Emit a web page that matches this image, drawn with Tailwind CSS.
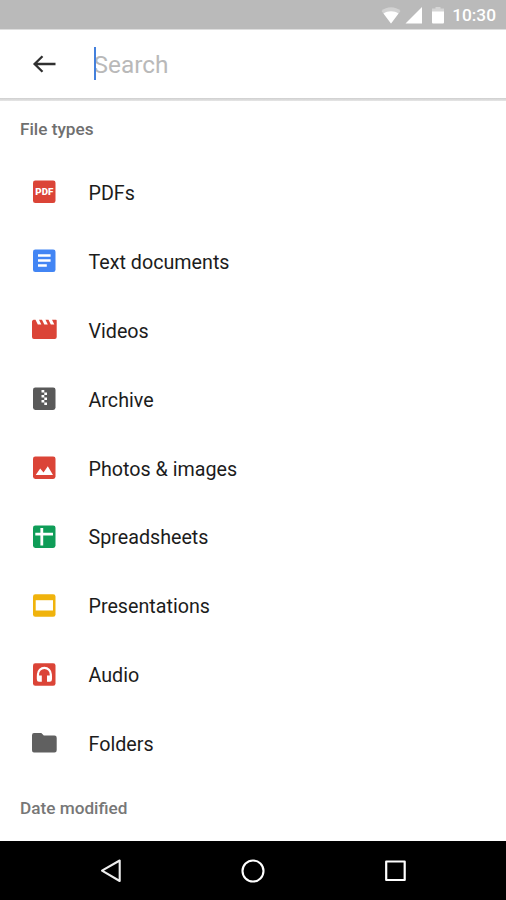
<!DOCTYPE html>
<html lang="en">
<head>
<meta charset="utf-8">
<title>Search</title>
<script src="https://cdn.jsdelivr.net/npm/@tailwindcss/browser@4"></script>
</head>
<body class="bg-white">
<div class="flex h-[900px] w-[506px] flex-col overflow-hidden bg-white font-['Roboto',sans-serif] text-[#1c1c1c]">
  <div class="flex h-[29px] shrink-0 items-center justify-end bg-[#bababa] pr-[10px] pt-[1px] text-white">
    <svg class="mr-[4px] h-[18px] w-[20px]" viewBox="0 0 20 18" fill="#fff"><path opacity=".35" d="M10 17.500 0.500 5C5.500 0 14.500 0 19.500 5Z"/><path d="M10 17.500 2.500 7.500C6.500 4.500 13.500 4.500 17.500 7.500Z"/></svg>
    <svg class="mr-[9px] h-[18px] w-[18px]" viewBox="0 0 18 18" fill="#fff"><path d="M0.500 17.500H17V1Z"/></svg>
    <svg class="mr-[8px] h-[18px] w-[12px]" viewBox="0 0 12 18" fill="#fff"><path opacity=".4" d="M3.500 1h5v1.500H12V6H0V2.500h3.500Z"/><path d="M0 5.500h12v11q0 1-1 1H1q-1 0-1-1Z"/></svg>
    <span class="text-[17.300px] font-medium leading-[20px]">10:30</span>
  </div>
  <div class="flex h-[69px] shrink-0 items-center border-t border-[#dedede] pl-[32px]">
    <svg class="h-[20px] w-[25px]" viewBox="0 0 25 20" fill="none" stroke="#303030" stroke-width="2.300"><path d="M23.500 10H2.500M10.500 2.300 2.600 10l7.900 7.700"/></svg>
    <div class="relative ml-[36.500px]">
      <span class="block pt-[1px] text-[24.400px] leading-[33px] text-[#b9b9b9]">Search</span>
      <span class="absolute left-0 top-0 h-[33px] w-[2.500px] bg-[#4380dc]"></span>
    </div>
  </div>
  <div class="h-[3px] shrink-0 bg-linear-to-b from-[#cfcfcf] to-[#e6e6e6]"></div>
  <h2 class="flex h-[57px] shrink-0 items-center pb-[2px] pl-[20px] text-[17.200px] font-medium leading-[20px] text-[#6f6f6f]">File types</h2>
  <ul class="shrink-0 text-[19.700px] leading-[24px]">
    <li class="flex h-[68.900px] items-center pl-[30px]"><svg class="mr-[30.500px] h-[28px] w-[28px]" viewBox="0 0 28 28"><rect x="3" y="2.500" width="22.500" height="22.500" rx="2.300" fill="#db4437"/><text x="14.300" y="17.300" text-anchor="middle" font-family="Roboto" font-weight="900" font-size="9.800" textLength="18" lengthAdjust="spacingAndGlyphs" fill="#fff">PDF</text></svg><span class="pt-[3px]">PDFs</span></li>
    <li class="flex h-[68.900px] items-center pl-[30px]"><svg class="mr-[30.500px] h-[28px] w-[28px]" viewBox="0 0 28 28"><rect x="3" y="2.500" width="22.500" height="22.500" rx="2.300" fill="#4285f4"/><path fill="#fff" d="M8 7.300h12.600v2.500H8ZM8 12.300h12.600v2.500H8ZM8 17.300h8.800v2.500H8Z"/></svg><span class="pt-[3px]">Text documents</span></li>
    <li class="flex h-[68.900px] items-center pl-[30px]"><svg class="mr-[30.500px] h-[28px] w-[28px]" viewBox="0 0 28 28"><path fill="#db4437" d="M3.500 3.800H5.500l2.300 4.600h3.500L9 3.800h3l2.300 4.600h3.500l-2.300-4.600h3l2.300 4.600h3.500L22 3.800h4q.7 0 .7.700V21q0 2-2 2H4q-2 0-2-2V5.500q0-1.200 1.500-1.700Z"/></svg><span class="pt-[3px]">Videos</span></li>
    <li class="flex h-[68.900px] items-center pl-[30px]"><svg class="mr-[30.500px] h-[28px] w-[28px]" viewBox="0 0 28 28"><rect x="3" y="2.400" width="22.500" height="22.500" rx="2.300" fill="#595959"/><path fill="#fff" d="M11.500 4.900h2.800v2.500h-2.800ZM14.300 7.400H17v2.500h-2.700ZM11.500 9.900h2.800v2.500h-2.800ZM14.300 12.400H17v2.500h-2.700ZM11.500 14.900h2.800v2.500h-2.800ZM14.300 17.400H17v2.500h-2.700Z"/></svg><span class="pt-[3px]">Archive</span></li>
    <li class="flex h-[68.900px] items-center pl-[30px]"><svg class="mr-[30.500px] h-[28px] w-[28px]" viewBox="0 0 28 28"><rect x="3" y="2.400" width="22.500" height="22.500" rx="2.300" fill="#db4437"/><path fill="#fff" d="m5.700 21 4.500-6.500 3.300 4 4.300-6.200 5.200 8.700Z"/></svg><span class="pt-[3px]">Photos &amp; images</span></li>
    <li class="flex h-[68.900px] items-center pl-[30px]"><svg class="mr-[30.500px] h-[28px] w-[28px]" viewBox="0 0 28 28"><rect x="3" y="2.400" width="22.500" height="22.500" rx="2.300" fill="#0f9d58"/><path fill="#fff" d="M10.400 5h2.800v4.800h9.800v2.600h-9.800v10h-2.800v-10H5.300V9.800h5.100Z"/></svg><span class="pt-[3px]">Spreadsheets</span></li>
    <li class="flex h-[68.900px] items-center pl-[30px]"><svg class="mr-[30.500px] h-[28px] w-[28px]" viewBox="0 0 28 28"><rect x="3" y="2.200" width="22.500" height="22.500" rx="2.300" fill="#f0b30c"/><path fill="#fff" d="M5.700 8.200h17.300v10.300H5.700Z"/></svg><span class="pt-[3px]">Presentations</span></li>
    <li class="flex h-[68.900px] items-center pl-[30px]"><svg class="mr-[30.500px] h-[28px] w-[28px]" viewBox="0 0 28 28"><rect x="3" y="2.200" width="22.500" height="22.500" rx="2.300" fill="#db4437"/><path fill="none" stroke="#fff" stroke-width="2.200" d="M8 18v-4.700a6.400 6.400 0 0 1 12.800 0V18"/><path fill="#fff" d="M6.900 14.500h4.900v6.300H9q-2.100 0-2.100-2ZM17 14.500h4.900v4.300q0 2-2.100 2H17Z"/></svg><span class="pt-[3px]">Audio</span></li>
    <li class="flex h-[68.900px] items-center pl-[30px]"><svg class="mr-[30.500px] h-[28px] w-[28px]" viewBox="0 0 28 28"><path fill="#606060" d="M4 3h7.300l2.500 2.500h10.700q2.200 0 2.200 2.200v12.600q0 2.200-2.200 2.200H4q-2 0-2-2.200V5.200Q2 3 4 3Z"/></svg><span class="pt-[3px]">Folders</span></li>
  </ul>
  <h2 class="flex min-h-0 flex-1 items-center pb-[4px] pl-[20px] text-[17.200px] font-medium leading-[20px] text-[#777]">Date modified</h2>
  <div class="flex h-[59px] shrink-0 items-center bg-black pl-[98px]">
    <svg class="h-[28px] w-[28px]" viewBox="0 0 28 28" fill="none" stroke="#eee" stroke-width="2.100" stroke-linejoin="round"><path d="M21.700 3.500V24L4 13.700Z"/></svg>
    <svg class="ml-[113px] h-[28px] w-[28px]" viewBox="0 0 28 28" fill="none" stroke="#fff" stroke-width="2.100"><circle cx="14" cy="14" r="10.500"/></svg>
    <svg class="ml-[114px] h-[28px] w-[28px]" viewBox="0 0 28 28" fill="none" stroke="#fff" stroke-width="2.200" stroke-linejoin="round"><rect x="5.200" y="4.500" width="18.500" height="18.500"/></svg>
  </div>
</div>
</body>
</html>
